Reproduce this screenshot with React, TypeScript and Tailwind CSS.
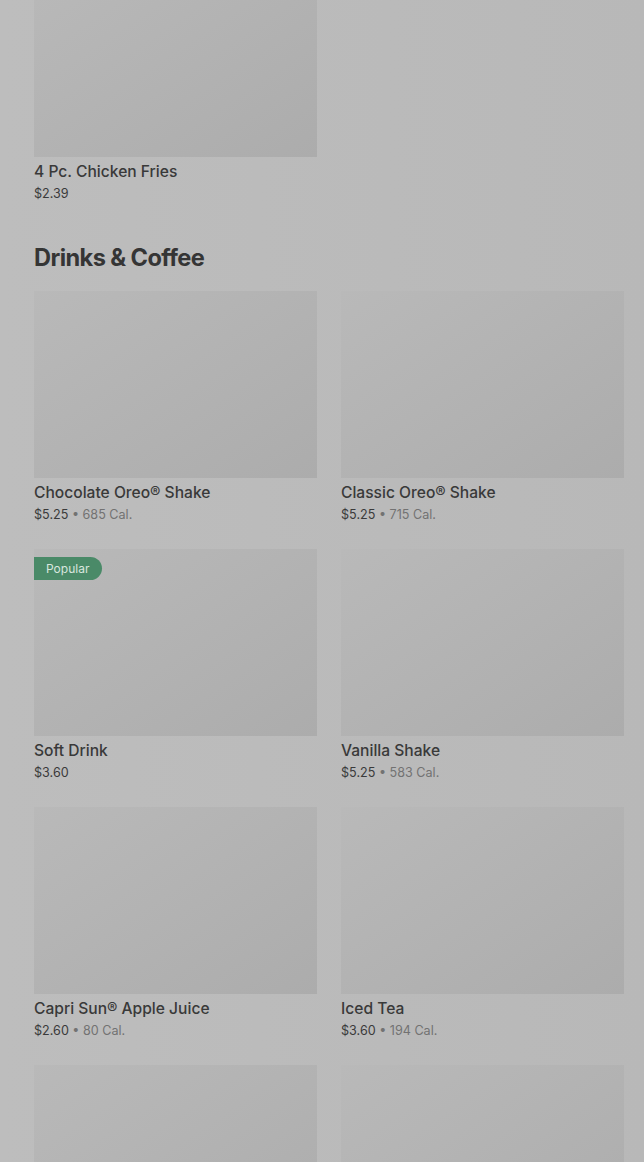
import React from 'react';

interface Item {
  name: string;
  price: string;
  cal?: string;
  popular?: boolean;
}

const drinks: Item[] = [
  { name: 'Chocolate Oreo® Shake', price: '$5.25', cal: '685 Cal.' },
  { name: 'Classic Oreo® Shake', price: '$5.25', cal: '715 Cal.' },
  { name: 'Soft Drink', price: '$3.60', popular: true },
  { name: 'Vanilla Shake', price: '$5.25', cal: '583 Cal.' },
  { name: 'Capri Sun® Apple Juice', price: '$2.60', cal: '80 Cal.' },
  { name: 'Iced Tea', price: '$3.60', cal: '194 Cal.' },
  { name: '', price: '' },
  { name: '', price: '' },
];

const MenuCard = ({ item }: { item: Item }) => {
  return (
    <div>
      <div className="relative h-[187px] bg-gradient-to-br from-[#b9b9b9] to-[#acacac]">
        {item.popular && (
          <div className="absolute left-0 top-2 flex h-[23px] w-[68px] items-center rounded-r-full bg-[#4a8a68] pl-3 text-[12px] text-[#d9e6df]">
            Popular
          </div>
        )}
      </div>
      {item.name && (
        <>
          <div className="mt-[3px] text-[15.6px] leading-6 font-medium text-[#393939]">{item.name}</div>
          <div className="text-[12.6px] leading-5 text-[#3a3a3a]">
            {item.price}
            {item.cal && (
              <span className="text-[#727272]">
                {' • '}
                {item.cal}
              </span>
            )}
          </div>
        </>
      )}
    </div>
  );
};

export default function App() {
  return (
    <div
      className="h-[1162px] overflow-hidden bg-gradient-to-r from-[#bdbdbd] to-[#b8b8b8] pl-[34px] pr-[20px]"
      style={{ fontFamily: 'Inter, "Noto Sans", sans-serif' }}
    >
      <div className="-mt-[30px] grid grid-cols-2 gap-x-6">
        <MenuCard item={{ name: '4 Pc. Chicken Fries', price: '$2.39' }} />
      </div>
      <h2 className="mt-[38px] mb-[17px] text-[23.6px] leading-8 font-bold tracking-tight text-[#353535]">
        Drinks &amp; Coffee
      </h2>
      <div className="grid grid-cols-2 gap-x-6 gap-y-6">
        {drinks.map((d, i) => (
          <MenuCard key={i} item={d} />
        ))}
      </div>
    </div>
  );
}
